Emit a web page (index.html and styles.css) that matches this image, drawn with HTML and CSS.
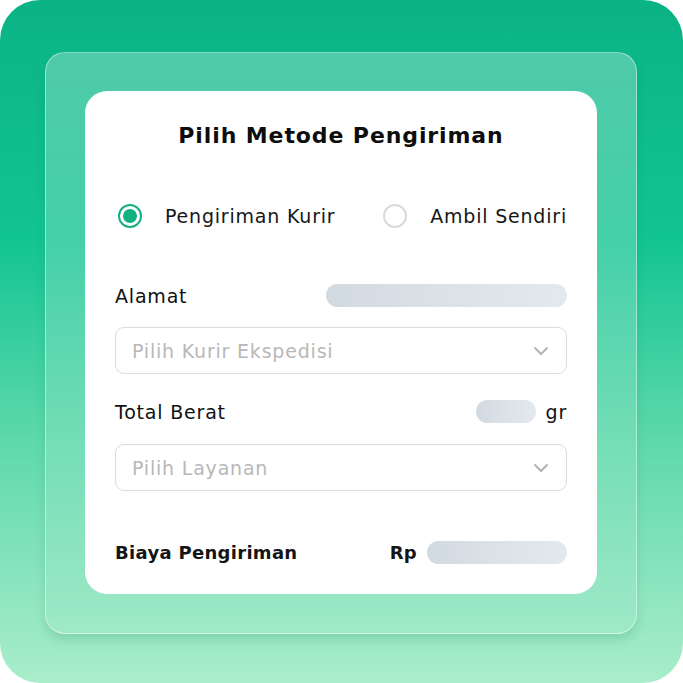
FILE: index.html
```html
<!DOCTYPE html>
<html>
<head>
<meta charset="utf-8">
<link rel="stylesheet" href="styles.css">
</head>
<body>
<div class="stage">
  <div class="glass">
    <div class="card">
      <h1 class="title">Pilih Metode Pengiriman</h1>
      <div class="radios">
        <div class="radio-opt">
          <span class="radio checked"><span class="dot"></span></span>
          <span class="radio-label">Pengiriman Kurir</span>
        </div>
        <div class="radio-opt">
          <span class="radio"></span>
          <span class="radio-label">Ambil Sendiri</span>
        </div>
      </div>
      <div class="row row-alamat">
        <span class="label">Alamat</span>
        <span class="pill pill-wide"></span>
      </div>
      <div class="select select-1">
        <span class="placeholder">Pilih Kurir Ekspedisi</span>
        <svg class="chev" width="16" height="10" viewBox="0 0 16 10"><path d="M2 2 L8 8 L14 2" fill="none" stroke="#b3b3b3" stroke-width="2" stroke-linecap="round" stroke-linejoin="round"/></svg>
      </div>
      <div class="row row-berat">
        <span class="label">Total Berat</span>
        <span class="right-group"><span class="pill pill-small"></span><span class="unit">gr</span></span>
      </div>
      <div class="select select-2">
        <span class="placeholder">Pilih Layanan</span>
        <svg class="chev" width="16" height="10" viewBox="0 0 16 10"><path d="M2 2 L8 8 L14 2" fill="none" stroke="#b3b3b3" stroke-width="2" stroke-linecap="round" stroke-linejoin="round"/></svg>
      </div>
      <div class="row row-biaya">
        <span class="label strong">Biaya Pengiriman</span>
        <span class="right-group"><span class="unit strong">Rp</span><span class="pill pill-mid"></span></span>
      </div>
    </div>
  </div>
</div>
</body>
</html>
```
FILE: styles.css
```css
html, body {
  margin: 0;
  padding: 0;
  background: #ffffff;
}
body {
  font-family: "DejaVu Sans", "Noto Sans", sans-serif;
  color: #111;
}
.stage {
  width: 683px;
  height: 683px;
  box-sizing: border-box;
  border-radius: 40px;
  background: linear-gradient(180deg, #0ab386 0%, #12c491 35%, #5fd9ac 65%, #aaedca 100%);
  padding: 52px 46px 49px 45px;
}
.glass {
  height: 100%;
  box-sizing: border-box;
  border-radius: 20px;
  background: linear-gradient(180deg, rgba(255,255,255,0.28) 0%, rgba(255,255,255,0.18) 50%, rgba(255,255,255,0.06) 100%);
  border: 1px solid rgba(255,255,255,0.45);
  box-shadow: 0 6px 10px rgba(20, 120, 90, 0.18);
  padding: 38px 39px 39px 39px;
}
.card {
  height: 100%;
  box-sizing: border-box;
  background: #ffffff;
  border-radius: 22px;
  padding: 30px 30px 0 30px;
  display: flex;
  flex-direction: column;
}
.title {
  margin: 0;
  text-align: center;
  font-size: 22px;
  line-height: 29px;
  font-weight: 700;
  letter-spacing: 0.9px;
  color: #0d0d0d;
}
.radios {
  margin-top: 54px;
  display: flex;
  justify-content: space-between;
  align-items: center;
  height: 24px;
}
.radio-opt {
  display: flex;
  align-items: center;
  gap: 23px;
}
.radio-opt:first-child { margin-left: 3px; }
.radio {
  width: 24px;
  height: 24px;
  box-sizing: border-box;
  border-radius: 50%;
  border: 2px solid #dadadd;
  display: flex;
  align-items: center;
  justify-content: center;
}
.radio.checked {
  border-color: #12b183;
}
.dot {
  width: 14px;
  height: 14px;
  border-radius: 50%;
  background: #12b183;
}
.radio-label, .label, .unit, .placeholder {
  font-size: 19px;
  letter-spacing: 0.8px;
  line-height: 22px;
}
.radio-label { color: #161616; }
.row {
  display: flex;
  justify-content: space-between;
  align-items: center;
  height: 23px;
}
.row-alamat { margin-top: 56px; }
.row-berat { margin-top: 26px; }
.row-biaya { margin-top: 50px; }
.label { color: #111; }
.label.strong, .unit.strong {
  font-weight: 700;
  font-size: 18px;
  letter-spacing: 0.3px;
  color: #151515;
}
.pill {
  display: block;
  height: 23px;
  border-radius: 12px;
  background: linear-gradient(90deg, #d2dae1 0%, #e4e9ee 100%);
}
.pill-wide { width: 241px; }
.pill-small { width: 60px; }
.pill-mid { width: 140px; }
.right-group {
  display: flex;
  align-items: center;
  gap: 10px;
}
.unit { color: #111; }
.select {
  height: 47px;
  box-sizing: border-box;
  border: 1px solid #dcdcdc;
  border-radius: 9px;
  display: flex;
  align-items: center;
  justify-content: space-between;
  padding: 0 17px 0 16px;
}
.select-1 { margin-top: 20px; }
.select-2 { margin-top: 21px; }
.placeholder { color: #b8b8b8; }
.chev { display: block; }
```
